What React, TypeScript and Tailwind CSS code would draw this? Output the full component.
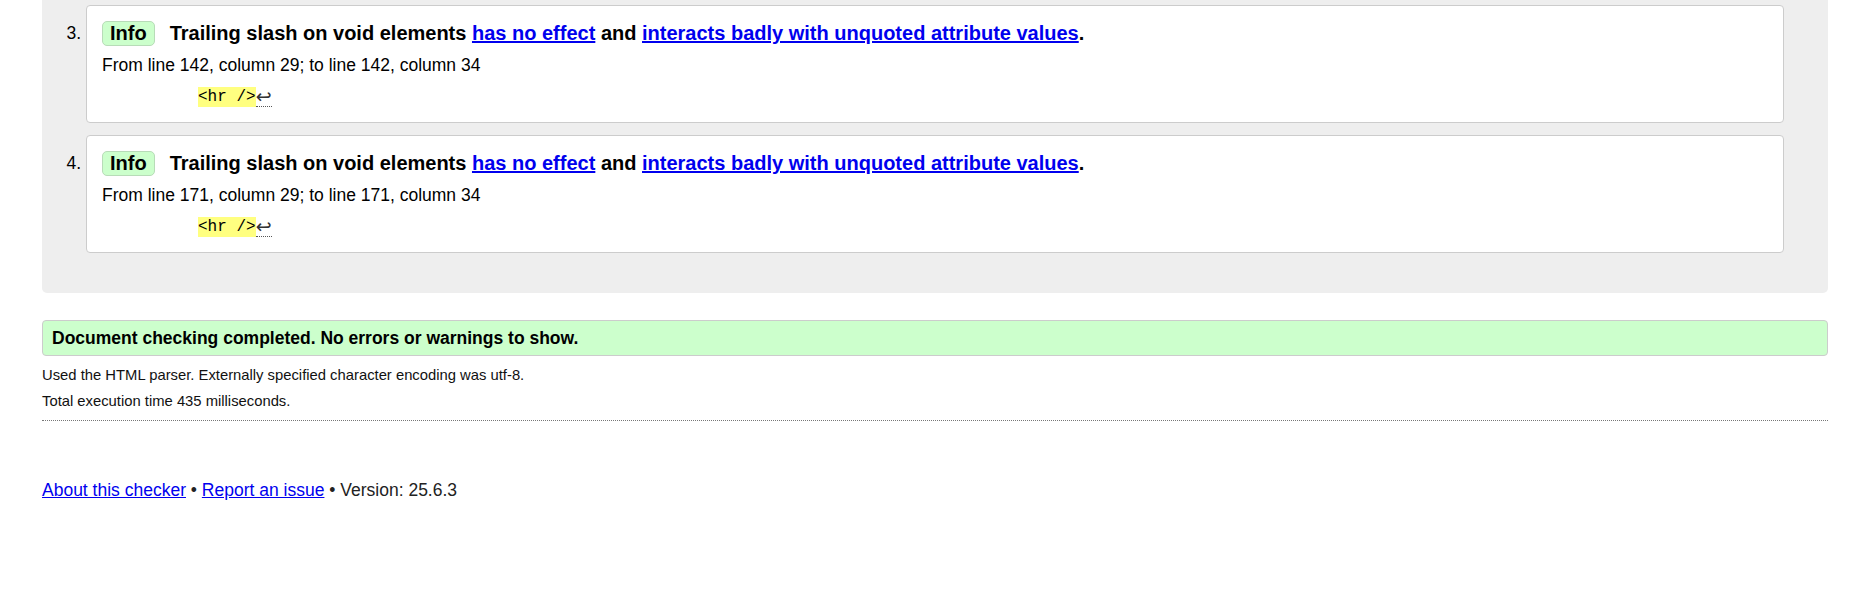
import React from "react";

const sans = { fontFamily: '"Liberation Sans", Arial, sans-serif' };

function Item({ n, from, to }: { n: number; from: number; to: number }) {
  return (
    <div className="flex">
      <div className="w-[44px] shrink-0 pr-[5px] pt-[15px] text-right">
        <div className="h-[26px] leading-[26px] text-[17.5px] text-black">{n}.</div>
      </div>
      <div className="flex-1 rounded-[4px] border border-[#cccccc] bg-white pl-[15px] pr-[14px] pt-[14px] pb-[12px]">
        <div className="flex h-[26px] items-center">
          <span className="flex h-[25px] items-center rounded-[5px] border border-[#b8dcb8] bg-[#ccffcc] px-[7px] text-[20px] font-bold leading-none text-black">
            Info
          </span>
          <span className="ml-[15px] text-[20px] font-bold leading-[26px] text-black">
            Trailing slash on void elements{" "}
            <a href="#" className="text-[#0000ee] underline">
              has no effect
            </a>{" "}
            and{" "}
            <a href="#" className="text-[#0000ee] underline">
              interacts badly with unquoted attribute values
            </a>
            .
          </span>
        </div>
        <div className="mt-[6px] h-[26px] text-[17.5px] leading-[26px] text-black">
          From line {from}, column 29; to line {to}, column 34
        </div>
        <div className="mt-[6px] flex h-[26px] items-center pl-[96px]">
          <span
            className="flex h-[20px] items-center bg-[#ffff80] text-[16px] text-black"
            style={{ fontFamily: '"Liberation Mono", "DejaVu Sans Mono", monospace' }}
          >
            {"<hr />"}
          </span>
          <span
            className="flex h-[20px] w-[16px] items-center justify-center border-b border-dotted border-[#555] text-[19px] leading-none text-[#333]"
            style={{ fontFamily: '"DejaVu Sans", sans-serif' }}
          >
            ↩
          </span>
        </div>
      </div>
    </div>
  );
}

export default function App() {
  return (
    <div className="min-h-[614px] w-full bg-white" style={sans}>
      <div className="ml-[42px] w-[1786px]">
        <div className="flex flex-col gap-[12px] rounded-b-[5px] bg-[#eeeeee] pt-[5px] pb-[40px] pr-[44px]">
          <Item n={3} from={142} to={142} />
          <Item n={4} from={171} to={171} />
        </div>

        <div className="mt-[27px] flex h-[36px] items-center rounded-[4px] border border-[#cccccc] bg-[#ccffcc] px-[9px] text-[17.5px] font-bold text-black">
          Document checking completed. No errors or warnings to show.
        </div>

        <div className="mt-[6px] h-[26px] text-[14.8px] leading-[26px] text-[#111]">
          Used the HTML parser. Externally specified character encoding was utf-8.
        </div>
        <div className="h-[26px] text-[14.8px] leading-[26px] text-[#111]">
          Total execution time 435 milliseconds.
        </div>
        <div className="mt-[6px] border-t border-dotted border-[#777]" />

        <div className="mt-[56px] h-[26px] text-[17.5px] leading-[26px] text-[#222]">
          <a href="#" className="text-[#0000ee] underline">
            About this checker
          </a>{" "}
          •{" "}
          <a href="#" className="text-[#0000ee] underline">
            Report an issue
          </a>{" "}
          • Version: 25.6.3
        </div>
      </div>
    </div>
  );
}
